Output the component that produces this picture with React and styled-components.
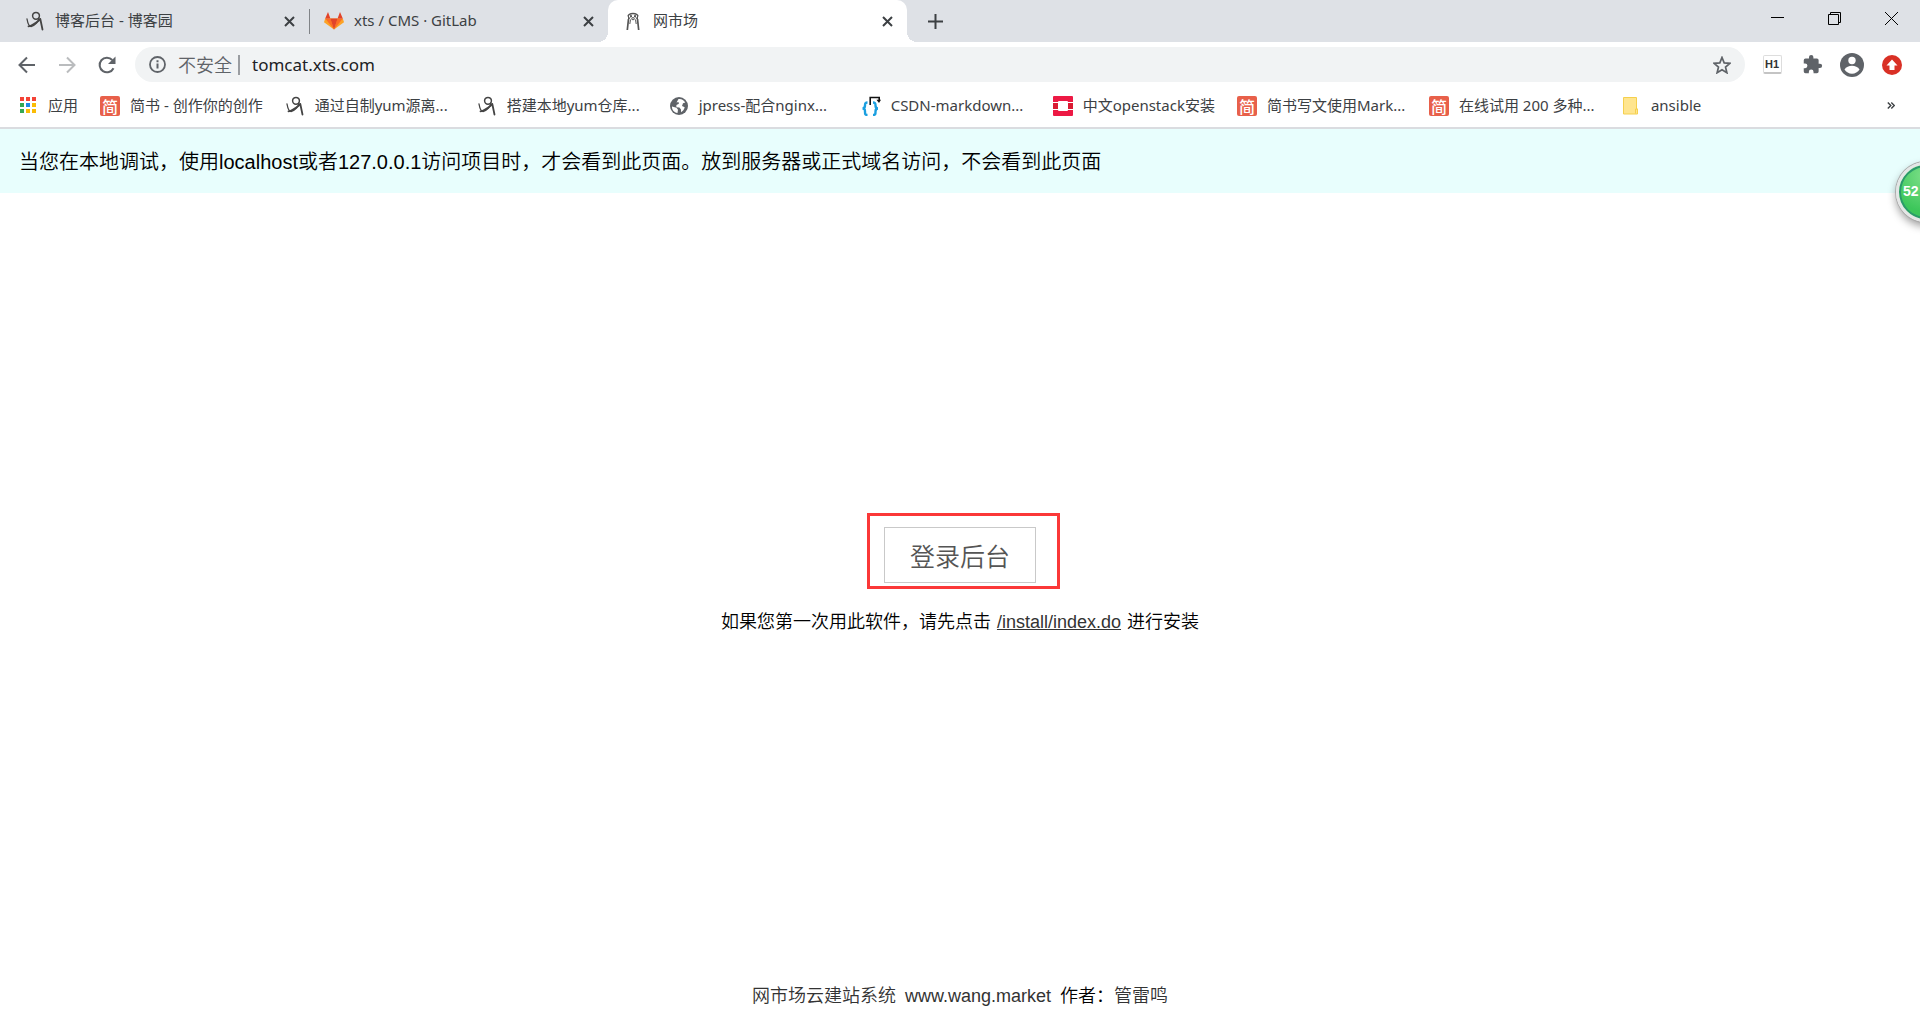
import React from 'react'
import styled, { createGlobalStyle, css } from 'styled-components';

const BOOKMARKS = [
    { icon: 'apps', text: '应用' },
    { icon: 'jian', text: '简书 - 创作你的创作' },
    { icon: 'cnblogs', text: '通过自制yum源离...', wide: true },
    { icon: 'cnblogs', text: '搭建本地yum仓库...', wide: true },
    { icon: 'globe', text: 'jpress-配合nginx...', wide: true },
    { icon: 'braces', text: 'CSDN-markdown...', wide: true },
    { icon: 'openstack', text: '中文openstack安装' },
    { icon: 'jian', text: '简书写文使用Mark...', wide: true },
    { icon: 'jian', text: '在线试用 200 多种...', wide: true },
    { icon: 'folder', text: 'ansible' },
]

const TABS = [
    { icon: 'cnblogs', title: '博客后台 - 博客园', divider: true },
    { icon: 'gitlab', title: 'xts / CMS · GitLab' },
    { icon: 'wang', title: '网市场', active: true },
]

function SiteIcon({ name }) {
    if (name === 'jian') return <Jian>简</Jian>
    return (
        <Icon viewBox="0 0 20 20" aria-hidden="true">
            {name === 'cnblogs' && (
                <g fill="none" stroke="#444" strokeLinecap="round">
                    <circle cx="11" cy="4.800" r="3.400" strokeWidth="1.500" />
                    <path d="M14 7c-.5 3.500-3.500 7.500-8 8.500C3.800 15.500 2.800 12.500 2 8" strokeWidth="1.300" />
                    <path d="M3.500 15.300c4.500-.5 7.500-3.500 11.500-6.800" strokeWidth="1.800" />
                    <path d="M15.300 8l2.200 10.500" strokeWidth="1.800" />
                </g>
            )}
            {name === 'gitlab' && (
                <g>
                    <path d="M10 18.500L0 11.200 1.200 7.500h17.600L20 11.200z" fill="#fca326" />
                    <path d="M10 18.500L1.200 7.500h5.200zM10 18.500l8.800-11h-5.200z" fill="#fc6d26" />
                    <path d="M10 18.500L6.400 7.500h7.200z" fill="#e24329" />
                    <path d="M1.200 7.500L4 1l2.400 6.500zM18.800 7.500L16 1l-2.400 6.500z" fill="#e24329" />
                </g>
            )}
            {name === 'wang' && (
                <g fill="none" stroke="#555">
                    <path d="M5 5.500C5.500 3 7 2.500 10 2.500s4.500.5 5 3" strokeWidth="1.500" />
                    <path d="M5.500 4v4M14.500 4v4M7 3.500l3 4 3-4M6 8l2.500-4M14 8l-2.500-4M8 7.500l2 1.500 2-1.500" />
                    <path d="M5.500 8L4.300 19M14.500 8l1.200 11" strokeWidth="1.700" />
                    <path d="M7.500 8.500L6.800 13M12.500 8.500l.7 4.500" />
                </g>
            )}
            {name === 'apps' && [0, 1, 2].map(r => [0, 1, 2].map(c => (
                <rect key={r + '-' + c} x={2 + c * 6} y={1 + r * 6} width="4" height="4" fill={DOTS[r][c]} />
            )))}
            {name === 'globe' && (
                <g>
                    <circle cx="10" cy="10" r="9" fill="#5f6368" />
                    <path d="M3 10.500l4.500 1.300 1.500 2-.5 3.200C5 16.500 2.700 13.500 3 10.500zM9.500 3c3-.4 5.500 1.200 6.800 3.500l-2.300.8-1 2.700 2.700 1.300c-.5 2.200-1.800 4-3.700 4.900v-2.700l-1.600-2-3-.3V9l2.500-1.300-.4-1.700-2 .5z" fill="#fff" />
                </g>
            )}
            {name === 'braces' && (
                <g fill="none">
                    <path d="M6.500 6.500C4 6.500 4 7.500 4 9.500c0 2-.5 3-2.500 3 2 0 2.500 1 2.500 3C4 18 4 19 6.500 19M12 6.500c2.500 0 2.500 1 2.500 3 0 2 .5 3 2.500 3-2 0-2.500 1-2.500 3 0 2.500 0 3.500-2.500 3.500" stroke="#1a9fe0" strokeWidth="2.400" />
                    <path d="M9.200 9V1.500h9v3" stroke="#111" strokeWidth="1.600" />
                    <path d="M15.500 3.800h4.500L18 7z" fill="#111" />
                </g>
            )}
            {name === 'openstack' && (
                <g>
                    <rect width="20" height="20" rx="1" fill="#ed1944" />
                    <path d="M0 6h5v1H0zM15 6h5v1h-5zM0 13h5v1H0zM15 13h5v1h-5z" fill="#fff" />
                    <path d="M0 7h5v6H0zM15 7h5v6h-5z" fill="#da1a32" />
                    <rect x="5" y="5" width="10" height="10" rx="1" fill="#fff" />
                </g>
            )}
            {name === 'folder' && (
                <g stroke="#f5d04e">
                    <path d="M2.500 1.500h13v11.500h1v5h-14z" fill="#ffe58f" />
                    <path d="M14.500 17.500v-4.500h2" fill="none" />
                </g>
            )}
        </Icon>
    )
}

function App() {
  return (
    <Window>
        <GlobalStyle />
        <TabStrip>
            {TABS.map(tab => (
                <Tab key={tab.title} $active={tab.active} $divider={tab.divider}>
                    <SiteIcon name={tab.icon} />
                    <Label>{tab.title}</Label>
                    <TabClose aria-label="关闭标签页">
                        <svg width="11" height="11" viewBox="0 0 11 11"><path d="M1 1l9 9M10 1l-9 9" stroke="#3c4043" strokeWidth="2" /></svg>
                    </TabClose>
                </Tab>
            ))}
            <NewTab aria-label="新标签页">
                <svg width="15" height="15" viewBox="0 0 15 15"><path d="M7.500 0v15M0 7.500h15" stroke="#3c4043" strokeWidth="2" /></svg>
            </NewTab>
            <Controls>
                <ControlButton aria-label="最小化">
                    <svg width="13" height="13" viewBox="0 0 13 13"><path d="M0 5.500h13" stroke="#000" /></svg>
                </ControlButton>
                <ControlButton aria-label="还原">
                    <svg width="13" height="13" viewBox="0 0 13 13"><path d="M.5 2.500h10v10H.5zM2.500 2.500v-2h10v10h-2" fill="none" stroke="#000" /></svg>
                </ControlButton>
                <ControlButton aria-label="关闭">
                    <svg width="13" height="13" viewBox="0 0 13 13"><path d="M0 0l13 13M13 0L0 13" stroke="#000" /></svg>
                </ControlButton>
            </Controls>
        </TabStrip>

        <Toolbar>
            <ToolButton aria-label="后退">
                <svg width="18" height="18" viewBox="0 0 18 18"><path d="M17 9H2M9 1.500L1.500 9 9 16.500" fill="none" stroke="#5f6368" strokeWidth="2" /></svg>
            </ToolButton>
            <ToolButton aria-label="前进">
                <svg width="18" height="18" viewBox="0 0 18 18"><path d="M1 9h15M9 1.500L16.500 9 9 16.500" fill="none" stroke="#babcbe" strokeWidth="2" /></svg>
            </ToolButton>
            <ToolButton aria-label="重新加载">
                <svg width="18" height="18" viewBox="0 0 18 18">
                    <path d="M15.500 12.200A7.300 7.300 0 1 1 14.300 4" fill="none" stroke="#5f6368" strokeWidth="2" />
                    <path d="M17.500 .5v7.500H10z" fill="#5f6368" />
                </svg>
            </ToolButton>
            <Omnibox>
                <svg width="17" height="17" viewBox="0 0 17 17">
                    <circle cx="8.500" cy="8.500" r="7.500" fill="none" stroke="#5f6368" strokeWidth="1.800" />
                    <path d="M8.500 7.500v5M8.500 4.300v2" stroke="#5f6368" strokeWidth="2" />
                </svg>
                <Insecure>不安全</Insecure>
                <Url aria-label="地址" defaultValue="tomcat.xts.com" />
                <StarButton aria-label="添加书签">
                    <svg width="18" height="18" viewBox="0 0 24 24"><path d="M12 2l2.900 7.200 7.600.6-5.800 5 1.800 7.500-6.500-4-6.500 4 1.800-7.500-5.800-5 7.600-.6z" fill="none" stroke="#5f6368" strokeWidth="2.300" /></svg>
                </StarButton>
            </Omnibox>
            <ToolButton aria-label="Markdown"><Heading>H1</Heading></ToolButton>
            <ToolButton aria-label="扩展程序">
                <svg width="21" height="21" viewBox="0 0 24 24"><path d="M20.500 11H19V7a2 2 0 0 0-2-2h-4V3.500a2.500 2.500 0 0 0-5 0V5H4a2 2 0 0 0-2 2v3.800h1.500a2.700 2.700 0 0 1 0 5.400H2V20a2 2 0 0 0 2 2h3.800v-1.500a2.700 2.700 0 0 1 5.400 0V22H17a2 2 0 0 0 2-2v-4h1.500a2.500 2.500 0 0 0 0-5z" fill="#5f6368" /></svg>
            </ToolButton>
            <ToolButton aria-label="用户">
                <svg width="24" height="24" viewBox="0 0 24 24">
                    <circle cx="12" cy="12" r="12" fill="#5f6368" />
                    <circle cx="12" cy="7.500" r="3.700" fill="#fff" />
                    <path d="M4.500 16.500c1.500-2.500 4.500-3.700 7.500-3.700s6 1.200 7.500 3.700C18 19 15 20.700 12 20.700S6 19 4.500 16.500z" fill="#fff" />
                </svg>
            </ToolButton>
            <ToolButton aria-label="更新">
                <svg width="20" height="20" viewBox="0 0 20 20">
                    <circle cx="10" cy="10" r="10" fill="#d93025" />
                    <path d="M10 4.500l5.500 6H12.500v4.500h-5v-4.500h-3z" fill="#fff" />
                </svg>
            </ToolButton>
        </Toolbar>

        <Bookmarks>
            {BOOKMARKS.map(item => (
                <Bookmark key={item.text} href="#" $wide={item.wide}>
                    <SiteIcon name={item.icon} />
                    <Label>{item.text}</Label>
                </Bookmark>
            ))}
            <More aria-label="更多书签">
                <svg width="8" height="7" viewBox="0 0 8 7"><path d="M.8 .5l3 3-3 3M4.300 .5l3 3-3 3" fill="none" stroke="#3c4043" strokeWidth="1.400" /></svg>
            </More>
        </Bookmarks>

        <Page>
            <Notice>当您在本地调试，使用localhost或者127.0.0.1访问项目时，才会看到此页面。放到服务器或正式域名访问，不会看到此页面</Notice>
            <Main>
                <Marked>
                    <Login>登录后台</Login>
                </Marked>
                <Line>
                    <span>如果您第一次用此软件，请先点击</span>
                    <Link href="#" $underline>/install/index.do</Link>
                    <span>进行安装</span>
                </Line>
            </Main>
            <Footer>
                <Link href="#">网市场云建站系统</Link>
                <Link href="#">www.wang.market</Link>
                <span>作者：<Link href="#">管雷鸣</Link></span>
            </Footer>
            <Ball>52</Ball>
        </Page>
    </Window>
  )
}

export default App

const DOTS = [
    ['#f44336', '#f44336', '#f44336'],
    ['#34a853', '#1e88e5', '#fbbc05'],
    ['#34a853', '#fbbc05', '#fbbc05'],
]

const GlobalStyle = createGlobalStyle`
* { box-sizing: border-box; }
body {
    margin: 0;
    background: #fff;
}
button {
    padding: 0;
    border: 0;
    background: none;
    font: inherit;
    color: inherit;
}
svg {
    display: block;
    flex-shrink: 0;
}
`

const center = css`
display: flex;
align-items: center;
justify-content: center;
`

const Window = styled.div`
display: flex;
flex-direction: column;
min-height: 100vh;
overflow: hidden;
font-family: "Noto Sans", "Noto Sans CJK SC", sans-serif;
font-size: 15px;
color: #3c4043;
`

const TabStrip = styled.div`
display: flex;
height: 42px;
padding-left: 10px;
background: #dee1e6;
`

const Tab = styled.div`
position: relative;
display: flex;
align-items: center;
gap: 10px;
width: 299px;
padding: 0 14px 0 15px;
border-radius: 10px 10px 0 0;
background: ${p => p.$active ? '#fff' : 'transparent'};

${p => p.$divider && css`
&::after {
    content: '';
    position: absolute;
    right: -1px;
    top: 9px;
    width: 1px;
    height: 25px;
    background: #808387;
}
`}
${p => p.$active && css`
&::before, &::after {
    content: '';
    position: absolute;
    bottom: 0;
    width: 10px;
    height: 10px;
}
&::before {
    left: -10px;
    background: radial-gradient(circle at 0 0, transparent 10px, #fff 10px);
}
&::after {
    right: -10px;
    background: radial-gradient(circle at 100% 0, transparent 10px, #fff 10px);
}
`}
`

const Label = styled.span`
padding-bottom: 2px;
line-height: 20px;
white-space: nowrap;
`

const TabClose = styled.button`
${center}
margin-left: auto;
`

const NewTab = styled.button`
${center}
width: 36px;
margin-left: 10px;
`

const Controls = styled.div`
display: flex;
height: 36px;
margin-left: auto;
`

const ControlButton = styled.button`
${center}
width: 57px;
`

const Toolbar = styled.div`
display: flex;
align-items: center;
height: 45px;
padding: 0 8px 0 7px;
`

const ToolButton = styled.button`
${center}
width: 40px;
height: 35px;
`

const Omnibox = styled.div`
flex: 1;
display: flex;
align-items: center;
height: 35px;
margin: 0 7px 0 8px;
padding-left: 14px;
border-radius: 18px;
background: #f1f3f4;
`

const Insecure = styled.span`
margin-left: 12px;
padding-right: 6px;
border-right: 2px solid #9a9da1;
font-size: 18px;
font-weight: 350;
line-height: 20px;
color: #5f6368;
`

const Url = styled.input`
flex: 1;
min-width: 0;
padding: 0 0 0 12px;
border: 0;
outline: 0;
background: none;
font-family: inherit;
font-size: 17px;
color: #202124;
`

const StarButton = styled.button`
${center}
width: 46px;
`

const Heading = styled.span`
${center}
width: 19px;
height: 19px;
border: 1px solid #ddd;
border-bottom: 2px solid #c4c4c4;
border-radius: 2px;
font: bold 11px "Liberation Sans", sans-serif;
color: #333;
`

const Bookmarks = styled.div`
display: flex;
align-items: center;
gap: 22px;
height: 42px;
padding: 0 25px 3px 18px;
border-bottom: 2px solid #dadce0;
`

const Bookmark = styled.a`
display: flex;
align-items: center;
gap: 10px;
width: ${p => p.$wide ? '170px' : 'auto'};
color: inherit;
text-decoration: none;
white-space: nowrap;
`

const More = styled.button`
margin-left: auto;
`

const Icon = styled.svg`
width: 20px;
height: 20px;
`

const Jian = styled.span`
${center}
flex-shrink: 0;
width: 20px;
height: 20px;
border-radius: 2px;
background: #e8604a;
font: 500 16px "Noto Sans CJK SC", sans-serif;
line-height: 20px;
color: #fff;
`

const Page = styled.div`
position: relative;
flex: 1;
display: flex;
flex-direction: column;
font-family: "Liberation Sans", "Noto Sans CJK SC", sans-serif;
font-size: 18px;
font-weight: 350;
color: #000;
`

const Notice = styled.div`
padding: 18px 19px 15px;
background: #e8fefd;
font-size: 20px;
line-height: 31px;
`

const Main = styled.main`
flex: 1;
display: flex;
flex-direction: column;
align-items: center;
justify-content: center;
gap: 26px;
padding-bottom: 14px;
`

/* red frame drawn round the login button */
const Marked = styled.div`
position: relative;

&::after {
    content: '';
    position: absolute;
    inset: -14px -24px -6px -17px;
    border: 3px solid #fb3838;
    pointer-events: none;
}
`

const Login = styled.button`
height: 56px;
padding: 0 25px;
border: 1px solid #c9c9c9;
font-size: 25px;
color: #555;
`

const Line = styled.div`
display: flex;
gap: 6px;
line-height: 26px;
`

const Link = styled.a`
color: #333;
text-decoration: ${p => p.$underline ? 'underline' : 'none'};
`

const Footer = styled.footer`
display: flex;
justify-content: center;
gap: 9px;
padding-bottom: 18px;
line-height: 26px;
`

const Ball = styled.div`
position: absolute;
top: 33px;
right: -36px;
width: 60px;
height: 60px;
padding-left: 4px;
border: 3px solid #e4e6e6;
border-radius: 50%;
background: radial-gradient(circle at 50% 20%, #7ee08a, #3cc65a 70%);
box-shadow: inset 0 0 0 2px #2b9a6b, 0 0 0 1px #aaa, 0 4px 8px rgba(0, 0, 0, 0.4);
font-size: 14px;
font-weight: bold;
line-height: 52px;
color: #fff;
`
